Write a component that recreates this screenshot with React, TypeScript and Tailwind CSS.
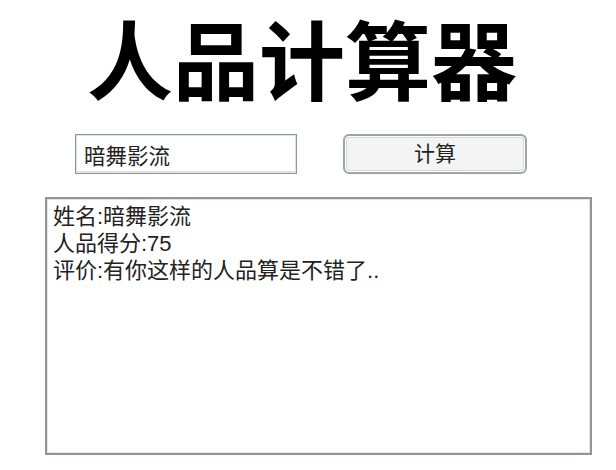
import React from "react";

const cjk = "font-['Liberation_Sans','Noto_Sans_CJK_SC',sans-serif]";

export default function App() {
  const result = "姓名:暗舞影流\n人品得分:75\n评价:有你这样的人品算是不错了..";

  return (
    <div className={`w-[616px] h-[470px] bg-white overflow-hidden ${cjk}`}>
      <h1 className="pt-[21px] pr-[12px] text-center text-[86px] leading-none font-bold text-black">
        人品计算器
      </h1>

      <div className="flex items-center mt-[27px] pl-[75px] gap-[46px]">
        <input
          type="text"
          defaultValue="暗舞影流"
          className="w-[222px] h-[40px] border border-[#8f9795] shadow-[inset_0_0_0_1px_#dfe3e2,inset_0_-2px_0_#dde1e0] bg-white pl-[8px] text-[21.5px] text-[#222] outline-none"
        />
        <button className="w-[184px] h-[40px] rounded-[6px] border-2 border-[#a0a5a4] shadow-[inset_0_0_0_1px_#fff,inset_0_0_0_2px_#d5d9d8] bg-[#f4f4f4] text-[21px] text-[#222]">
          计算
        </button>
      </div>

      <div className="pl-[45px] mt-[23px]">
        <textarea
          readOnly
          value={result}
          className="block w-[547px] h-[258px] resize-none border-2 border-[#8f9796] shadow-[inset_0_0_0_1px_#e3e6e5] bg-white pl-[6px] pt-[4px] text-[22px] leading-[27px] text-[#222] outline-none"
        />
      </div>
    </div>
  );
}
